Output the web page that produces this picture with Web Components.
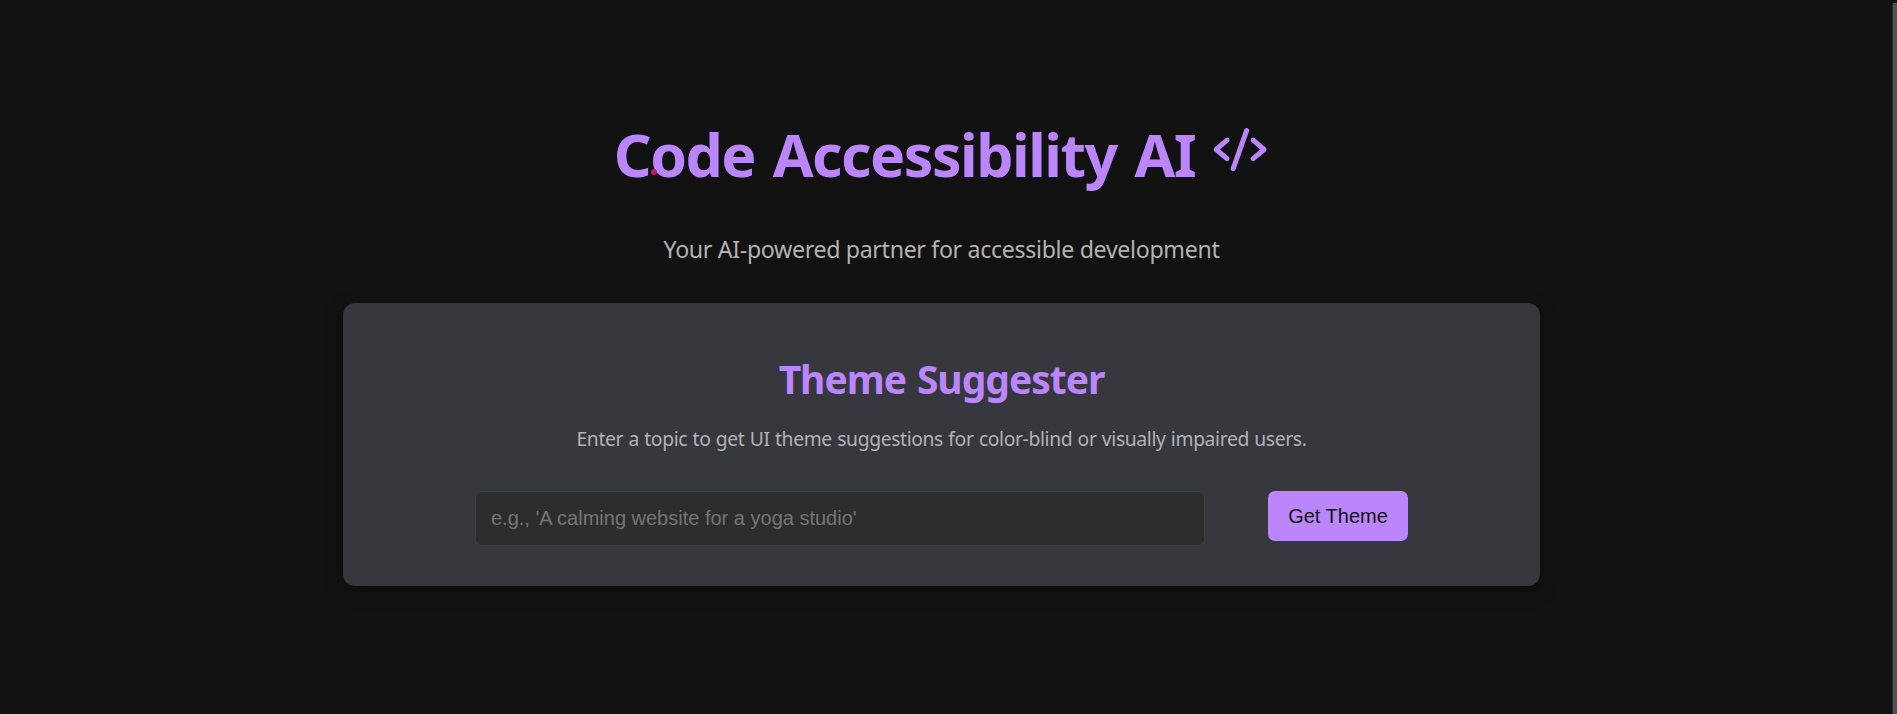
<!DOCTYPE html>
<html lang="en">
<head>
<meta charset="utf-8">
<title>Code Accessibility AI</title>
<style>
  html, body { margin: 0; height: 100%; overflow: hidden; background: #121212; }
  body { font-family: "Noto Sans", "Open Sans", sans-serif; color: #b3b3b3; }
</style>
</head>
<body>
<app-shell>
  <app-header>
    <span slot="title">Code Accessibility AI</span>
    <span slot="tagline">Your AI-powered partner for accessible development</span>
  </app-header>
  <tool-card>
    <span slot="heading">Theme Suggester</span>
    <span slot="description">Enter a topic to get UI theme suggestions for color-blind or visually impaired users.</span>
    <prompt-form>Get Theme</prompt-form>
  </tool-card>
</app-shell>

<script>
const define = (name, html) => customElements.define(name, class extends HTMLElement {
  constructor() {
    super();
    this.attachShadow({ mode: "open" }).innerHTML = html;
  }
});

define("code-icon", `
  <style>
    :host { display: block; width: 60px; height: 48px; }
    svg { display: block; width: 100%; height: 100%; }
  </style>
  <svg viewBox="0 0 60 48" fill="none" stroke="#bb86fc" stroke-width="5" stroke-linecap="round" stroke-linejoin="round">
    <path d="M18 16.2 7.2 25.5 18 34.6M37.6 6.6 24.2 44.6M44.2 16.2 55 25.5 44.2 34.6"/>
  </svg>`);

define("app-shell", `
  <style>
    :host { display: grid; grid-template-columns: 1fr 5px; height: 714px; }
    main { display: flex; flex-direction: column; align-items: center; padding-right: 9px; }
    .track { background: #515155; border-left: 1px solid #29292b; box-sizing: border-box; margin-top: 3px; }
  </style>
  <main><slot></slot></main>
  <div class="track"></div>`);

define("app-header", `
  <style>
    :host { display: flex; flex-direction: column; align-items: center; height: 303px; box-sizing: border-box; padding-top: 113px; }
    h1 { margin: 0; display: flex; align-items: flex-start; position: relative; color: #bb86fc; font-size: 59px; line-height: 82px; font-weight: 700; letter-spacing: -1.48px; word-spacing: 3.8px; white-space: nowrap; }
    code-icon { margin: 11px 0 0 14px; }
    .dot { position: absolute; left: 37px; top: 56px; width: 6px; height: 6px; border-radius: 50%; background: #c2186b; }
    p { margin: 36px 0 0; font-size: 23.2px; line-height: 36px; white-space: nowrap; letter-spacing: -0.34px; }
  </style>
  <h1><slot name="title"></slot><code-icon></code-icon><i class="dot"></i></h1>
  <p><slot name="tagline"></slot></p>`);

define("tool-card", `
  <style>
    :host { display: flex; flex-direction: column; align-items: center; width: 1197px; height: 283px; box-sizing: border-box; padding-top: 48px; background: #37383d; border-radius: 12px; box-shadow: 0 5px 19px rgba(0,0,0,.3); }
    h2 { margin: 0; color: #bb86fc; font-size: 39px; line-height: 56px; font-weight: 700; white-space: nowrap; letter-spacing: -1.02px; word-spacing: 1.8px; }
    p { margin: 17px 0 0; font-size: 19.3px; line-height: 30px; white-space: nowrap; letter-spacing: -0.36px; word-spacing: 0.7px; }
  </style>
  <h2><slot name="heading"></slot></h2>
  <p><slot name="description"></slot></p>
  <slot></slot>`);

define("prompt-form", `
  <style>
    :host { display: flex; align-items: flex-start; gap: 63px; margin-top: 37px; font-family: "Liberation Sans", Arial, sans-serif; }
    input { box-sizing: border-box; width: 730px; height: 55px; margin: 0; padding: 0 15px; font: 20px "Liberation Sans", Arial, sans-serif; color: #e0e0e0; background: #2d2d2d; border: 1px solid #3e3e3f; border-radius: 7px; outline: none; }
    input::placeholder { color: #757575; opacity: 1; }
    button { box-sizing: border-box; width: 140px; height: 50px; margin: 0; padding: 0; border: 0; border-radius: 7px; background: #bb86fc; color: #121212; font: 20px "Liberation Sans", Arial, sans-serif; }
  </style>
  <input type="text" placeholder="e.g., 'A calming website for a yoga studio'">
  <button type="button"><slot></slot></button>`);
</script>
</body>
</html>
